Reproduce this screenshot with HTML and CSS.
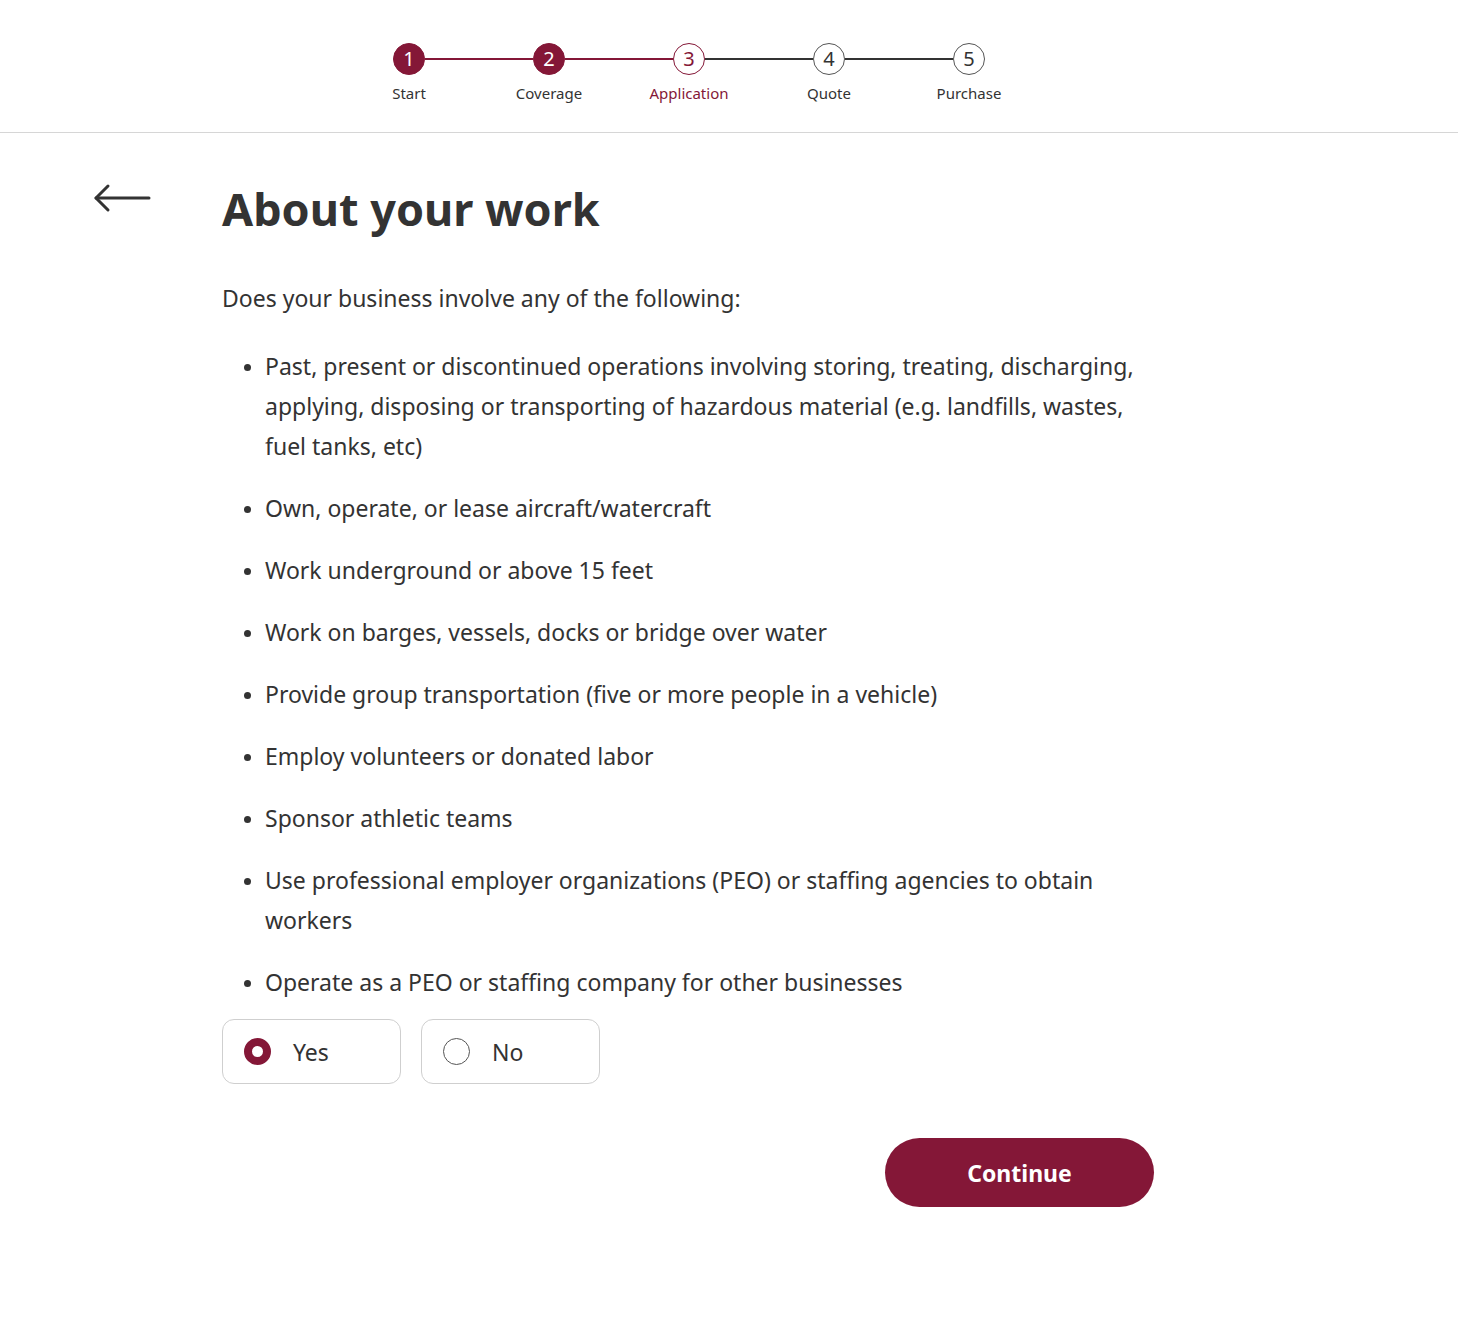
FILE: index.html
```html
<!DOCTYPE html>
<html lang="en">
<head>
    <meta charset="UTF-8">
    <meta name="viewport" content="width=device-width, initial-scale=1.0">
    <title>About your work</title>
    <link rel="stylesheet" href="styles.css">
</head>
<body>
    <!-- Progress steps -->
    <header class="stepper">
        <div class="step done">
            <span class="dot">1</span>
            <span class="label">Start</span>
        </div>
        <div class="bar done"></div>
        <div class="step done">
            <span class="dot">2</span>
            <span class="label">Coverage</span>
        </div>
        <div class="bar done"></div>
        <div class="step current">
            <span class="dot">3</span>
            <span class="label">Application</span>
        </div>
        <div class="bar"></div>
        <div class="step">
            <span class="dot">4</span>
            <span class="label">Quote</span>
        </div>
        <div class="bar"></div>
        <div class="step">
            <span class="dot">5</span>
            <span class="label">Purchase</span>
        </div>
    </header>

    <main class="page">
        <a class="back" href="#" aria-label="Back">
            <svg width="58" height="30" viewBox="0 0 58 30" fill="none" stroke="#333" stroke-width="3" stroke-linecap="round" stroke-linejoin="round">
                <path d="M56 15H3"/>
                <path d="M15 3L3 15L15 27"/>
            </svg>
        </a>

        <div class="content">
            <h1>About your work</h1>
            <p class="intro">Does your business involve any of the following:</p>

            <ul class="list">
                <li>Past, present or discontinued operations involving storing, treating, discharging, applying, disposing or transporting of hazardous material (e.g. landfills, wastes, fuel tanks, etc)</li>
                <li>Own, operate, or lease aircraft/watercraft</li>
                <li>Work underground or above 15 feet</li>
                <li>Work on barges, vessels, docks or bridge over water</li>
                <li>Provide group transportation (five or more people in a vehicle)</li>
                <li>Employ volunteers or donated labor</li>
                <li>Sponsor athletic teams</li>
                <li>Use professional employer organizations (PEO) or staffing agencies to obtain workers</li>
                <li>Operate as a PEO or staffing company for other businesses</li>
            </ul>

            <div class="choices">
                <label class="choice">
                    <input type="radio" name="answer" checked>
                    <span class="circle"></span>
                    Yes
                </label>
                <label class="choice">
                    <input type="radio" name="answer">
                    <span class="circle"></span>
                    No
                </label>
            </div>

            <div class="actions">
                <button class="continue">Continue</button>
            </div>
        </div>
    </main>
</body>
</html>
```

FILE: styles.css
```css
* {
    box-sizing: border-box;
}

body {
    margin: 0;
    font-family: "Noto Sans", "Open Sans", sans-serif;
    color: #333;
    background-color: #fff;
}

/* stepper */
.stepper {
    display: flex;
    justify-content: center;
    align-items: flex-start;
    padding: 43px 80px 0 0;
    height: 133px;
    border-bottom: 1px solid #d6d6d6;
}

.step {
    width: 32px;
    display: flex;
    flex-direction: column;
    align-items: center;
}

.dot {
    width: 32px;
    height: 32px;
    border-radius: 50%;
    border: 1.5px solid #555;
    display: flex;
    justify-content: center;
    align-items: center;
    font-size: 20px;
    line-height: 1;
    color: #333;
    background-color: #fff;
}

.step.done .dot {
    background-color: #841737;
    border-color: #841737;
    color: #fff;
}

.step.current .dot {
    border-color: #841737;
    color: #841737;
}

.label {
    margin-top: 8px;
    font-size: 15px;
    white-space: nowrap;
    color: #333;
}

.step.current .label {
    color: #841737;
}

.bar {
    width: 108px;
    height: 2px;
    margin-top: 15px;
    background-color: #333;
}

.bar.done {
    background-color: #841737;
}

/* main */
.page {
    display: flex;
    padding: 48px 0 0 93px;
}

.back {
    width: 129px;
    flex-shrink: 0;
    padding-top: 2px;
}

.content {
    width: 932px;
}

h1 {
    margin: 0;
    font-size: 45px;
    font-weight: 700;
    line-height: 56px;
    color: #333;
}

.intro {
    margin: 41px 0 0;
    font-size: 23px;
    line-height: 40px;
}

.list {
    margin: 28px 0 0;
    padding-left: 43px;
}

.list li {
    font-size: 23px;
    line-height: 40px;
    margin-bottom: 22px;
}

.list li:last-child {
    margin-bottom: 17px;
}

.list li::marker {
    font-size: 20px;
}

.choices {
    display: flex;
    gap: 20px;
}

.choice {
    width: 179px;
    height: 65px;
    border: 1px solid #cfcfcf;
    border-radius: 12px;
    display: flex;
    align-items: center;
    padding-left: 21px;
    font-size: 23px;
    cursor: pointer;
}

.choice input {
    display: none;
}

.circle {
    width: 27px;
    height: 27px;
    border-radius: 50%;
    border: 1.5px solid #555;
    margin-right: 22px;
}

.choice input:checked + .circle {
    border: 8px solid #841737;
}

.actions {
    display: flex;
    justify-content: flex-end;
    margin-top: 54px;
}

.continue {
    width: 269px;
    height: 69px;
    border: none;
    border-radius: 35px;
    background-color: #841737;
    color: #fff;
    font-family: inherit;
    font-size: 23px;
    font-weight: 700;
    cursor: pointer;
}
```
